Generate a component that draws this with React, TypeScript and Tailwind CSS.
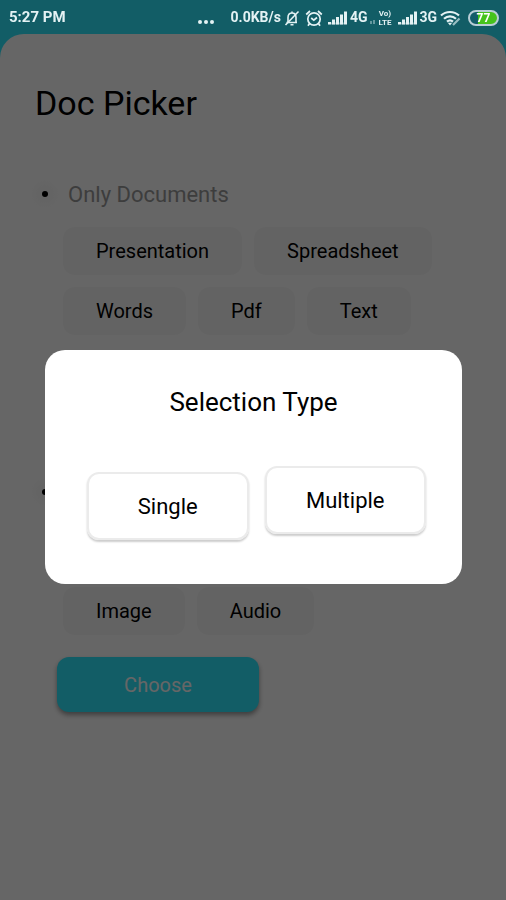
import React from 'react';

const DOCUMENT_TYPES = ['Presentation', 'Spreadsheet', 'Words', 'Pdf', 'Text'];
const MEDIA_TYPES = ['Image', 'Audio'];

const BellOffIcon = () => (
  <svg width="16" height="18" viewBox="0 0 16 18" fill="none" stroke="currentColor" strokeWidth="1.6">
    <path d="M2.500 13.500h10.500M4 13.500V8.500c0-3 1.600-4.500 4-4.500s4 1.500 4 4.500v5M8 4V2.500M6.500 15.800h3" />
    <path d="M14.500 2.500 1.500 16" />
  </svg>
);

const AlarmIcon = () => (
  <svg width="18" height="18" viewBox="0 0 18 18" fill="none" stroke="currentColor" strokeWidth="1.700">
    <circle cx="9" cy="10" r="6.200" />
    <path d="M1.200 5.500 5 2M16.800 5.500 13 2M6.200 9l2.600 2.200L12 8.500M4.500 14.500 3 16.800M13.500 14.500l1.500 2.300" />
  </svg>
);

const SignalIcon = () => (
  <svg width="19" height="18" viewBox="0 0 19 18" fill="currentColor">
    <path d="M0 13h3v2.500H0zM4 10.500h3v5H4zM8 8h3v7.500H8zM12 5.500h3v10h-3zM16 2.500h3v13h-3z" />
    <path d="M3 13.500h13v2H3z" opacity=".4" />
  </svg>
);

const WifiIcon = () => (
  <svg width="21" height="18" viewBox="0 0 21 18" fill="none" stroke="currentColor" strokeWidth="2.200">
    <path d="M1 6.500c5-4.700 13-4.700 18 0M4 9.700c3.500-3.200 8.500-3.200 12 0M7 12.700c1.800-1.500 4.200-1.500 6 0" />
    <path d="M7.800 13.800h4.400L10 16.500z" fill="currentColor" stroke="none" />
    <path d="M13 16 19.500 9.500" opacity=".65" />
  </svg>
);

const StatusBar = () => (
  <header className="relative z-20 flex h-[34px] items-center justify-between pl-[9px] pr-[7px] pt-px text-[14px] font-bold text-[#e4f2f4]">
    <span className="text-[15px]">5:27 PM</span>
    <div className="flex items-center">
      <svg className="mr-4" width="18" height="14" viewBox="0 0 18 14" fill="currentColor">
        <circle cx="3" cy="11" r="2" />
        <circle cx="9" cy="11" r="2" />
        <circle cx="15" cy="11" r="2" />
      </svg>
      <span className="mr-[3px]">0.0KB/s</span>
      <BellOffIcon />
      <span className="ml-[5px] mr-[5px]"><AlarmIcon /></span>
      <SignalIcon />
      <span className="ml-[3px]">4G</span>
      <svg className="ml-[2px] mr-1" width="5" height="12" viewBox="0 0 5 12" fill="currentColor" opacity=".4">
        <path d="M0 9h2v3H0zM3 8h2v4H3z" />
      </svg>
      <span className="mr-[7px] flex flex-col items-center text-[8px] leading-[9px]">
        <span>Vo)</span>
        <span>LTE</span>
      </span>
      <SignalIcon />
      <span className="ml-[2px] mr-[3px]">3G</span>
      <WifiIcon />
      <span className="ml-[7px] flex h-4 w-[31px] items-center justify-center rounded-full border-2 border-[#b9ced6] bg-linear-to-r from-[#135d69] from-28% to-[#45c31c] to-28% text-[12px] leading-none text-white">
        77
      </span>
    </div>
  </header>
);

const TypeChips = ({ types }: { types: string[] }) => (
  <div className="flex flex-wrap gap-3 pl-[34px]">
    {types.map((type) => (
      <button key={type} type="button" className="h-12 rounded-xl bg-[#f8f8f8] px-[33px] text-[20px] text-black">
        {type}
      </button>
    ))}
  </div>
);

const GroupRadio = ({ id, children }: { id: string; children?: React.ReactNode }) => (
  <div className="flex h-8 items-center gap-[7px]">
    <span className="flex size-8 items-center justify-center rounded-full bg-radial from-[#f7f7f7] to-white to-70%">
      <input
        id={id}
        type="radio"
        name={id}
        aria-label={id}
        className="size-[6px] appearance-none rounded-full bg-black"
      />
    </span>
    {children}
  </div>
);

const SelectionDialog = () => (
  <div className="fixed inset-0 z-10 flex items-center bg-black/60 pl-[45px] pr-[44px] pt-[34px]">
    <div
      role="dialog"
      aria-labelledby="selection-title"
      className="w-full rounded-[20px] bg-white pb-[44px] pt-9 text-black"
    >
      <h2 id="selection-title" className="text-center text-[26px] leading-8">Selection Type</h2>
      <div className="mt-12 flex gap-4 pl-[42px] pr-9">
        <button
          type="button"
          className="mt-[6px] h-[68px] flex-1 rounded-xl border-2 border-[#ebebeb] text-[22px] shadow-[0_2px_2px_rgba(0,0,0,0.2)]"
        >
          Single
        </button>
        <button
          type="button"
          className="mb-[6px] h-[68px] flex-1 rounded-xl border-2 border-[#ebebeb] text-[22px] shadow-[0_2px_2px_rgba(0,0,0,0.2)]"
        >
          Multiple
        </button>
      </div>
    </div>
  </div>
);

const App: React.FC = () => {
  return (
    <div className="flex min-h-screen flex-col bg-[#2fe8ff] font-['Roboto',sans-serif]">
      <StatusBar />
      <main className="flex-1 rounded-t-[24px] bg-white px-[29px] pt-[49px]">
        <h1 className="pl-[6px] text-[34px] leading-10 text-black">Doc Picker</h1>

        <section className="mt-[55px] space-y-[17px]">
          <GroupRadio id="documents">
            <label htmlFor="documents" className="text-[22px] text-[#9a9a9a]">Only Documents</label>
          </GroupRadio>
          <TypeChips types={DOCUMENT_TYPES} />
        </section>

        <section className="mt-[141px] space-y-[79px]">
          <GroupRadio id="media" />
          <TypeChips types={MEDIA_TYPES} />
        </section>

        <button
          type="button"
          className="ml-7 mt-[22px] h-[55px] w-[202px] rounded-xl bg-[#2fe8ff] text-[20px] text-white shadow-[0_3px_5px_rgba(0,0,0,0.4)]"
        >
          Choose
        </button>
      </main>
      <SelectionDialog />
    </div>
  );
};

export default App;
